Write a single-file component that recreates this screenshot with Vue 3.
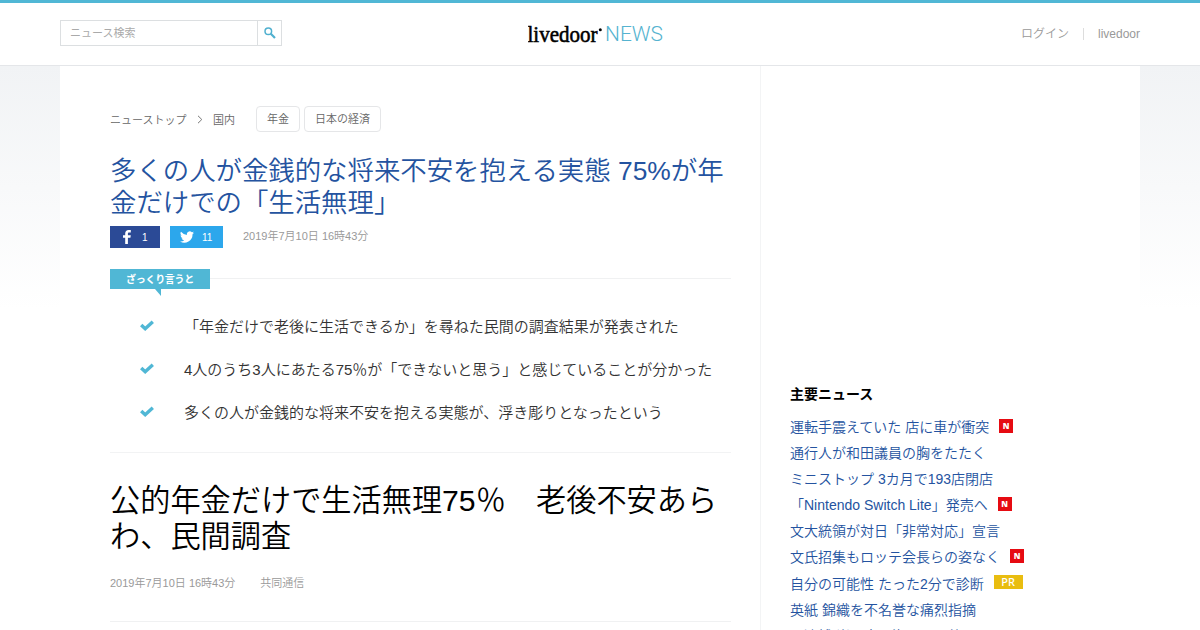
<script setup>
import { ref } from "vue"

const keyword = ref("")
const tags = ["年金", "日本の経済"]
const points = [
  "「年金だけで老後に生活できるか」を尋ねた民間の調査結果が発表された",
  "4人のうち3人にあたる75％が「できないと思う」と感じていることが分かった",
  "多くの人が金銭的な将来不安を抱える実態が、浮き彫りとなったという"
]
const topics = [
  { title: "運転手震えていた 店に車が衝突", badge: "N" },
  { title: "通行人が和田議員の胸をたたく" },
  { title: "ミニストップ 3カ月で193店閉店" },
  { title: "「Nintendo Switch Lite」発売へ", badge: "N" },
  { title: "文大統領が対日「非常対応」宣言" },
  { title: "文氏招集もロッテ会長らの姿なく", badge: "N" },
  { title: "自分の可能性 たった2分で診断", badge: "PR" },
  { title: "英紙 錦織を不名誉な痛烈指摘" },
  { title: "父逮捕 嵐の夜の海に子ら放置" }
]
</script>

<template>
  <div class="page">
    <header class="header">
      <div class="headerInner">
        <form
          class="search"
          @submit.prevent
        >
          <input
            v-model="keyword"
            type="text"
            placeholder="ニュース検索"
          >
          <button type="submit">
            <svg
              width="12"
              height="12"
              viewBox="0 0 12 12"
            >
              <circle
                cx="4.3"
                cy="4.2"
                r="3.3"
              />
              <path d="M6.8 6.8L11 11" />
            </svg>
          </button>
        </form>
        <a class="logo">
          <svg
            width="150"
            height="30"
            viewBox="0 0 150 30"
          >
            <text
              class="logoName"
              x="-0.5"
              y="22"
              textLength="70"
              lengthAdjust="spacingAndGlyphs"
            >livedoor</text>
            <circle
              cx="72.3"
              cy="9.7"
              r="1.5"
            />
            <text
              class="logoNews"
              x="77"
              y="21"
              textLength="58"
              lengthAdjust="spacingAndGlyphs"
            >NEWS</text>
          </svg>
        </a>
        <nav class="links">
          <a>ログイン</a>
          <a>livedoor</a>
        </nav>
      </div>
    </header>

    <div class="container">
      <main class="main">
        <div class="breadcrumb">
          <a>ニューストップ</a>
          <svg
            width="6"
            height="9"
            viewBox="0 0 6 9"
          >
            <path d="M1 0.8L4.8 4.5L1 8.2" />
          </svg>
          <a>国内</a>
          <div class="tags">
            <a
              v-for="tag in tags"
              :key="tag"
              class="tag"
            >{{ tag }}</a>
          </div>
        </div>

        <h1 class="title">多くの人が金銭的な将来不安を抱える実態 75%が年金だけでの「生活無理」</h1>

        <div class="social">
          <a class="share facebook">
            <svg
              width="8"
              height="14"
              viewBox="0 0 8 14"
            >
              <path d="M2.2 14V7.8H0V5.2H2.2V3.5C2.2 1.2 3.5 0 5.6 0H7.8V2.4H6.3C5.2 2.4 4.9 2.9 4.9 3.8V5.2H7.8L7.4 7.8H4.9V14Z" />
            </svg>
            <span>1</span>
          </a>
          <a class="share twitter">
            <svg
              width="14"
              height="12"
              viewBox="0 2 24 20"
            >
              <path d="M24 4.6a10 10 0 0 1-2.8.8 5 5 0 0 0 2.2-2.7 10 10 0 0 1-3.1 1.2 4.9 4.9 0 0 0-8.4 4.5A14 14 0 0 1 1.7 3.2a4.9 4.9 0 0 0 1.5 6.6 5 5 0 0 1-2.2-.6 4.9 4.9 0 0 0 3.9 4.9 5 5 0 0 1-2.2.1 4.9 4.9 0 0 0 4.6 3.4A9.9 9.9 0 0 1 0 19.5 14 14 0 0 0 21.5 7.1 10 10 0 0 0 24 4.6z" />
            </svg>
            <span>11</span>
          </a>
          <time>2019年7月10日 16時43分</time>
        </div>

        <section class="summary">
          <div class="summaryHead">
            <h2>ざっくり言うと</h2>
          </div>
          <ul>
            <li
              v-for="point in points"
              :key="point"
            >
              <svg
                width="14"
                height="11"
                viewBox="0 0 14 11"
              >
                <path d="M1.2 4.9L5.2 8.7L12.8 1.7" />
              </svg>
              <span>{{ point }}</span>
            </li>
          </ul>
        </section>

        <article class="article">
          <h2>公的年金だけで生活無理75％　老後不安あらわ、民間調査</h2>
          <div class="meta">
            <time>2019年7月10日 16時43分</time>
            <span>共同通信</span>
          </div>
        </article>
      </main>

      <aside class="side">
        <h3>主要ニュース</h3>
        <ul>
          <li
            v-for="topic in topics"
            :key="topic.title"
          >
            <a>{{ topic.title }}</a>
            <span
              v-if="topic.badge"
              class="badge"
              :class="topic.badge == 'PR' ? 'pr' : ''"
            >{{ topic.badge }}</span>
          </li>
        </ul>
      </aside>
    </div>
  </div>
</template>

<style>
body {
  overflow: hidden;
}
</style>

<style scoped>
* {
  box-sizing: border-box;
}

.page {
  height: 630px;
  overflow: hidden;
  font-family: "Liberation Sans", "Noto Sans CJK JP", sans-serif;
  font-weight: 350;
  color: #333;
  background: linear-gradient(#f1f3f5 66px, #fff 310px);
}

h1,
h2,
h3,
ul {
  margin: 0;
  padding: 0;
  font-weight: 350;
  list-style: none;
}

.header {
  height: 66px;
  border-top: 3px solid #50b7d5;
  border-bottom: 1px solid #e4e6e9;
  background-color: #fff;
}

.headerInner {
  display: grid;
  grid-template-columns: 468px 1fr auto;
  align-items: start;
  width: 1080px;
  margin: 0 auto;
  padding-top: 17px;
}

.search {
  display: flex;
  width: 222px;
  height: 26px;
  border: 1px solid #dcdfe1;
}

.search input {
  width: 197px;
  padding: 0 9px;
  border: none;
  outline: none;
  font-family: inherit;
  font-size: 11px;
}

.search input::placeholder {
  color: #aaa;
}

.search button {
  display: flex;
  align-items: center;
  justify-content: center;
  width: 24px;
  padding: 0;
  border: none;
  border-left: 1px solid #dcdfe1;
  background-color: #fff;
}

.search svg {
  fill: none;
  stroke: #50b0cf;
  stroke-width: 1.5;
}

.search path {
  stroke-width: 2.2;
}

.logo svg {
  display: block;
}

.logoName {
  font-family: "Liberation Serif", serif;
  font-size: 24px;
  font-weight: 400;
  fill: #000;
  stroke: #000;
  stroke-width: 0.6;
}

.logoNews {
  font-family: Roboto, sans-serif;
  font-size: 21px;
  font-weight: 300;
  fill: #55b3d0;
}

.links {
  display: flex;
  padding-top: 5px;
  font-size: 12px;
  line-height: 18px;
  color: #999;
}

.links a + a {
  margin-left: 14px;
  padding-left: 15px;
  background: linear-gradient(#ddd, #ddd) left center / 1px 12px no-repeat;
}

.container {
  display: flex;
  width: 1080px;
  height: 564px;
  margin: 0 auto;
  background-color: #fff;
}

.main {
  width: 701px;
  padding: 40px 29px 0 50px;
  border-right: 1px solid #f3f4f5;
}

.breadcrumb {
  display: flex;
  align-items: center;
  height: 26px;
  font-size: 11px;
  color: #666;
}

.breadcrumb svg {
  margin: 0 10px 0 10.5px;
  fill: none;
  stroke: #777;
}

.tags {
  display: flex;
  gap: 4px;
  margin-left: 21px;
}

.tag {
  height: 26px;
  padding: 0 10px;
  border: 1px solid #e5e6e8;
  border-radius: 4px;
  line-height: 25px;
}

.title {
  margin-top: 23px;
  font-size: 26.4px;
  line-height: 32px;
  color: #2453a0;
}

.social {
  display: flex;
  margin-top: 7px;
  height: 22px;
}

.share {
  display: flex;
  align-items: center;
  height: 22px;
  margin-right: 10px;
  font-size: 10px;
  color: #fff;
}

.share svg {
  fill: #fff;
}

.facebook {
  width: 50px;
  padding-left: 13px;
  background-color: #2b4a96;
}

.facebook span {
  margin-left: 11px;
}

.twitter {
  width: 53px;
  padding-left: 10px;
  background-color: #2ca7ec;
}

.twitter span {
  margin-left: 8px;
}

time {
  font-size: 11px;
  color: #999;
}

.social time {
  margin-left: 10px;
  line-height: 21px;
}

.summary {
  margin-top: 21px;
  height: 184px;
  border-bottom: 1px solid #f2f3f4;
}

.summaryHead {
  display: flex;
  align-items: center;
  height: 20px;
}

.summaryHead::after {
  content: "";
  flex: 1;
  height: 1px;
  margin-top: -1px;
  background-color: #f0f1f2;
}

.summaryHead h2 {
  position: relative;
  width: 100px;
  height: 20px;
  background-color: #50b7d5;
  color: #fff;
  font-size: 10px;
  font-weight: 700;
  letter-spacing: -0.3px;
  line-height: 21px;
  text-align: center;
}

.summaryHead h2::after {
  content: "";
  position: absolute;
  top: 20px;
  left: 45px;
  border-top: 7px solid #50b7d5;
  border-left: 6px solid transparent;
}

.summary ul {
  padding: 27px 0 0 30px;
}

.summary li {
  display: flex;
  height: 22px;
  margin-bottom: 21px;
  font-size: 15px;
  line-height: 22px;
  white-space: nowrap;
}

.summary li svg {
  margin: 4px 30px 0 0;
  fill: none;
  stroke: #50b7d5;
  stroke-width: 3.4;
}

.article {
  height: 169px;
  padding-top: 30px;
  border-bottom: 1px solid #f0f1f2;
}

.article h2 {
  font-size: 30.2px;
  line-height: 36px;
  color: #000;
}

.meta {
  display: flex;
  gap: 25px;
  margin-top: 20px;
  font-size: 11px;
  line-height: 16px;
  color: #999;
}

.side {
  padding: 318px 0 0 29px;
}

.side h3 {
  margin-bottom: 10px;
  font-size: 14px;
  font-weight: 700;
  line-height: 20px;
  color: #000;
}

.side li {
  display: flex;
  height: 26.1px;
  font-size: 14px;
  line-height: 26px;
  color: #2453a0;
  white-space: nowrap;
}

.badge {
  width: 14px;
  height: 14px;
  margin: 5px 0 0 10px;
  background-color: #e60b12;
  color: #fff;
  font-family: "Open Sans", sans-serif;
  font-size: 8px;
  font-weight: 800;
  line-height: 14px;
  text-align: center;
}

.pr {
  width: 29px;
  margin-top: 4px;
  background-color: #e9bd10;
  font-family: "Noto Sans", sans-serif;
  font-size: 11px;
  font-weight: 500;
}
</style>
